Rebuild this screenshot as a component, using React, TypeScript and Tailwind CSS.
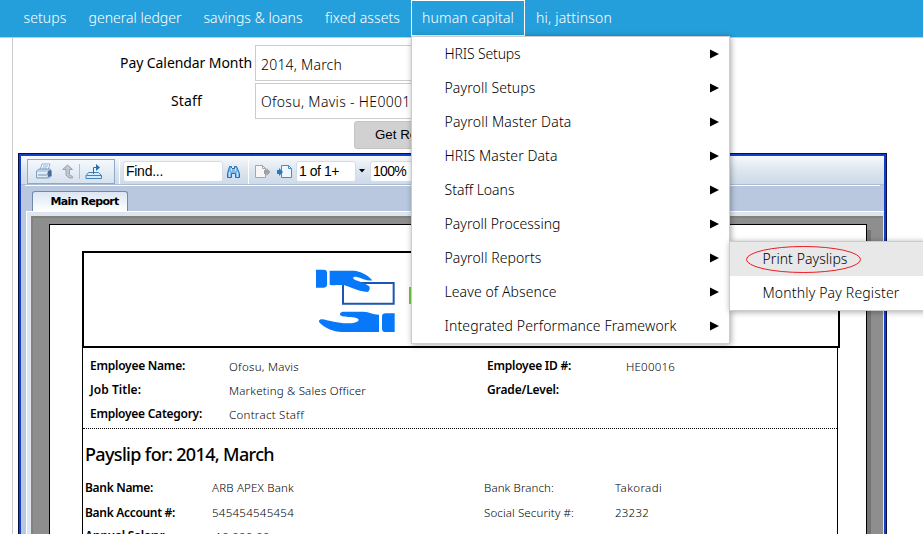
import { useLayoutEffect, useRef, useState } from "react";

/* Text set to a known line length: the tracking is worked out from the natural width. */
function Fit({ children, w, className = "" }: { children: string; w: number; className?: string }) {
  const ref = useRef<HTMLSpanElement>(null);
  const [tracking, setTracking] = useState(0);
  useLayoutEffect(() => {
    const natural = ref.current!.getBoundingClientRect().width;
    setTracking((w - natural) / children.length);
  }, []);
  return (
    <span ref={ref} className={`inline-block whitespace-pre ${className}`} style={{ letterSpacing: tracking }}>
      {children}
    </span>
  );
}

const nav = [
  { label: "setups", w: 43, box: "w-[66px]" },
  { label: "general ledger", w: 93, box: "w-[114px]" },
  { label: "savings & loans", w: 99, box: "w-[122px]" },
  { label: "fixed assets", w: 75, box: "w-[97px]" },
  { label: "human capital", w: 92, box: "w-[114px] border border-white" },
  { label: "hi, jattinson", w: 76, box: "w-[98px]" },
];

const menu = [
  { label: "HRIS Setups", w: 76 },
  { label: "Payroll Setups", w: 91 },
  { label: "Payroll Master Data", w: 127 },
  { label: "HRIS Master Data", w: 113 },
  { label: "Staff Loans", w: 70 },
  { label: "Payroll Processing", w: 116 },
  { label: "Payroll Reports", w: 97 },
  { label: "Leave of Absence", w: 112 },
  { label: "Integrated Performance Framework", w: 232 },
];

function NavBar() {
  return (
    <nav className="flex h-[38px] shrink-0 items-start border-b border-[#ccc] bg-[#259fdb] pl-3 text-sm font-[350] text-white">
      {nav.map((n) => (
        <div key={n.label} className={`flex h-[36px] items-center justify-center ${n.box}`}>
          <Fit w={n.w}>{n.label}</Fit>
        </div>
      ))}
    </nav>
  );
}

function Menus() {
  return (
    <>
      <div className="absolute top-[36px] left-[411px] h-[308px] w-[319px] border border-[#ccc] bg-white text-sm font-[350] text-black shadow-[1px_1px_6px_rgba(0,0,0,0.35)]">
        {menu.map((m) => (
          <div key={m.label} className="flex h-[34px] items-center justify-between pr-[10px] pl-[32.5px]">
            <Fit w={m.w}>{m.label}</Fit>
            <svg width="9" height="10" viewBox="0 0 9 10">
              <path d="M0 0.5 9 5 0 9.5z" fill="#000" />
            </svg>
          </div>
        ))}
      </div>
      <div className="absolute top-[241px] left-[729px] h-[70px] w-[210px] border border-[#ccc] bg-white text-sm font-[350] text-black shadow-[1px_1px_6px_rgba(0,0,0,0.35)]">
        <div className="flex h-[34px] items-center bg-[#e8e8e8] pl-[32.5px]">
          <Fit w={85}>Print Payslips</Fit>
        </div>
        <div className="flex h-[34px] items-center pl-[32.5px]">
          <Fit w={137}>Monthly Pay Register</Fit>
        </div>
      </div>
      <svg className="absolute top-[245px] left-[745px]" width="118" height="29" fill="none">
        <ellipse cx="58.5" cy="14.5" rx="57" ry="13" stroke="#ed1c24" />
      </svg>
    </>
  );
}

function Toolbar() {
  return (
    <div className="flex h-[29px] items-center border-b border-[#aebcd2] bg-linear-to-b from-[#f8fafc] via-[#dde6f0] to-[#cddae9] pt-[2px] pl-[6px] font-['Liberation_Sans',sans-serif] text-sm text-black">
      <div className="flex h-[25px] w-[88px] shrink-0 items-center border border-[#8fa9c4] bg-linear-to-b from-[#f4f8fc] to-[#d7e2ef] pl-[7px]">
        <svg width="18" height="17" viewBox="0 0 18 17">
          <path d="M5 7 7 1h8l-2 6z" fill="#fff" stroke="#8fb0d4" />
          <path d="M8 3h5M7 5h5" stroke="#7eb0de" />
          <path d="M1.5 8 4 6h11l1.5 2v5l-3 2h-12z" fill="#b9d0e8" stroke="#7f9fc2" />
          <path d="M2 9h10v5H2z" fill="#e2edf8" />
          <path d="M3 12h9" stroke="#6d8fb6" />
          <path d="M13 8v6l3-1V7z" fill="#426c9d" />
          <path d="M12 10h1.5v1.5H12z" fill="#e7683f" />
        </svg>
        <svg className="ml-[9px]" width="12" height="15" viewBox="0 0 12 15">
          <path d="M.7 5.5 5.5 1l5 4.5H7.4v5.2l3.2 2v1.2H7L4 11V5.5z" fill="#c4c6d2" stroke="#9b9fb0" />
        </svg>
        <div className="ml-[5px] h-[15px] w-px bg-[#aebdd0]" />
        <svg className="ml-[5px]" width="18" height="17" viewBox="0 0 18 17" fill="none">
          <path d="M3.5 9.5h10l3 3v3H1v-3z" fill="#d7eafa" stroke="#3c83bf" />
          <path d="M1.5 12.5h15" stroke="#3c83bf" />
          <path d="M8.5 11V4.5h4" stroke="#286fae" />
          <path d="m11 1 4 3.5-4 3.5z" fill="#286fae" />
        </svg>
      </div>
      <div className="ml-1 h-[25px] w-px shrink-0 bg-white" />
      <div className="ml-[3px] flex h-[21px] w-[100px] shrink-0 items-center rounded-[3px] border border-[#d6dce5] bg-white pl-[2px]">
        <Fit w={37}>Find...</Fit>
      </div>
      <svg className="ml-[3px] shrink-0" width="15" height="15" viewBox="0 0 15 15">
        <path d="M3.5 2.5h2v2h3v-2h2l3 7v4h-4v-4h-4v4h-4v-4z" fill="#7fb8e8" stroke="#2b6cad" />
        <path d="M3.5 8v5M11.5 8v5M5.5 4v3M9.5 4v3" stroke="#c9e5fb" />
      </svg>
      <div className="ml-[7px] h-[25px] w-px shrink-0 bg-white" />
      <svg className="ml-[6px] shrink-0" width="16" height="15" viewBox="0 0 16 15">
        <path d="M.5 1.5h7l3 3v9H.5z" fill="#f7f7f7" stroke="#a7a7a7" />
        <path d="M7.5 1.5v3h3" fill="none" stroke="#a7a7a7" />
        <path d="M9 6h2.5V4L15.5 8l-4 4v-2H9z" fill="#a1a1a1" />
      </svg>
      <svg className="ml-[6px] shrink-0" width="16" height="15" viewBox="0 0 16 15">
        <path d="M4.5 1.5h7l3 3v9h-10z" fill="#eef7ff" stroke="#3f8fcb" />
        <path d="M11.5 1.5v3h3" fill="none" stroke="#3f8fcb" />
        <path d="M0 6h2V4L6 8l-4 4v-2H0z" fill="#287bbb" />
      </svg>
      <div className="ml-[3px] flex h-[21px] w-[60px] shrink-0 items-center rounded-[3px] border border-[#d6dce5] bg-white pl-[2px]">
        <Fit w={40}>1 of 1+</Fit>
      </div>
      <svg className="ml-[3px] shrink-0" width="6" height="4">
        <path d="M0 0h6L3 3.5z" />
      </svg>
      <div className="ml-[5px] flex h-[21px] w-[70px] shrink-0 items-center rounded-[3px] border border-[#d6dce5] bg-white pl-[2px]">
        <Fit w={33}>100%</Fit>
      </div>
    </div>
  );
}

function Logo() {
  return (
    <svg width="79" height="65" viewBox="0 0 237 195" fill="#0878fa">
      <path d="M0 2h24q9 0 9 10v34q0 10-9 10H0z" />
      <path d="M81 42h152v62H81z" fill="#fff" stroke="#1c55b4" strokeWidth="6" />
      <path d="M41 5h72c20 2 42 12 56 29-16 3-30-6-46-10-12-2-15 4-7 8 14 5 34 12 44 20 3 8 0 15-6 17-26-2-46-12-68-20-16-3-30 2-45-2z" />
      <path d="M189 137c-22 0-28-9-46-9l-62 0c-10 1-12 9-4 13 14 6 38 1 49 8 8 8-10 13-27 14-33 1-58-8-79-12-9-1-14 5-9 10 14 15 40 27 67 28h111z" />
      <path d="M209 133h27v56h-27q-11 0-11-10v-36q0-10 11-10z" />
    </svg>
  );
}

const employee = [
  { a: "Employee Name:", aw: 95, b: "Ofosu, Mavis", bw: 70, c: "Employee ID #:", cw: 84, d: "HE00016", dw: 49 },
  { a: "Job Title:", aw: 51, b: "Marketing & Sales Officer", bw: 137, c: "Grade/Level:", cw: 72, d: "", dw: 0 },
  { a: "Employee Category:", aw: 112, b: "Contract Staff", bw: 75, c: "", cw: 0, d: "", dw: 0 },
];

const bank = [
  { a: "Bank Name:", aw: 68, b: "ARB APEX Bank", bw: 82, c: "Bank Branch:", cw: 70, d: "Takoradi", dw: 47, row: "h-[25px]" },
  { a: "Bank Account #:", aw: 90, b: "545454545454", bw: 82, c: "Social Security #:", cw: 90, d: "23232", dw: 34, row: "h-[25px]" },
  { a: "Annual Salary:", aw: 80, b: " 10,000.00", bw: 58, c: "", cw: 0, d: "", dw: 0, row: "h-[22px]" },
];

const value = "justify-self-start text-[11.5px] font-[350]";

function Payslip() {
  return (
    <div className="h-[311px] w-[818px] shrink-0 border border-b-0 border-black bg-white pt-[26px] pl-8 text-black">
      <div className="flex h-[97px] w-[758px] items-start border-2 border-black pt-4 pl-[232px]">
        <Logo />
        <div className="mt-[18px] ml-[14px] h-[17px] w-3 bg-[#7ac943]" />
      </div>
      <div className="h-[190px] w-[756px] border-x border-black">
        <div className="h-[81px] border-b border-dotted border-black pt-[6px] pl-[7px] text-xs">
          {employee.map((r) => (
            <div key={r.a} className="grid h-6 grid-cols-[139px_258px_139px_1fr] items-center">
              <Fit w={r.aw} className="justify-self-start font-semibold">{r.a}</Fit>
              {r.b && <Fit w={r.bw} className={`pt-px ${value}`}>{r.b}</Fit>}
              {r.c && <Fit w={r.cw} className="justify-self-start font-semibold">{r.c}</Fit>}
              {r.d && <Fit w={r.dw} className={`pt-px ${value}`}>{r.d}</Fit>}
            </div>
          ))}
        </div>
        <div className="pt-3 pl-[2px]">
          <div className="flex h-[26px] items-center text-lg font-medium">
            <Fit w={189}>Payslip for: 2014, March</Fit>
          </div>
          <div className="pt-2 text-xs">
            {bank.map((r) => (
              <div key={r.a} className={`grid grid-cols-[127px_272px_131px_1fr] items-center ${r.row}`}>
                <Fit w={r.aw} className="justify-self-start font-semibold">{r.a}</Fit>
                <Fit w={r.bw} className={`pt-px ${value}`}>{r.b}</Fit>
                {r.c && <Fit w={r.cw} className={value}>{r.c}</Fit>}
                {r.d && <Fit w={r.dw} className={`pt-px ${value}`}>{r.d}</Fit>}
              </div>
            ))}
          </div>
        </div>
      </div>
    </div>
  );
}

function ReportViewer() {
  return (
    <div className="ml-[5px] h-[381px] w-[869px] border border-b-0 border-[#07103f]">
      <div className="h-[380px] border-2 border-b-0 border-[#143fcb] bg-[#b9c8df]">
        <Toolbar />
        <div className="mx-1 h-px bg-white" />
        <div className="flex h-[25px] items-end pl-[11px]">
          <div className="flex h-[20px] w-[96px] items-center justify-center rounded-t-[3px] border border-b-0 border-[#7189aa] bg-linear-to-b from-[#dce6f2] to-white pl-[9px] font-['DejaVu_Sans',sans-serif] text-[11px] font-bold text-black">
            <Fit w={68}>Main Report</Fit>
          </div>
        </div>
        <div className="ml-[5px] h-[324px] border-t border-l border-white bg-[#dfe5ef] pt-1 pl-1">
          <div className="flex h-[320px] w-[852px] items-start border-t-2 border-l-2 border-t-[#7f837e] border-l-[#828282] bg-[#8e8e8e] pt-[6px] pl-4">
            <Payslip />
            <div className="mt-[6px] h-[306px] w-1 bg-[#747474]" />
          </div>
        </div>
      </div>
    </div>
  );
}

export default function App() {
  return (
    <div className="relative flex h-[534px] w-[923px] flex-col overflow-hidden bg-white font-['Noto_Sans',sans-serif]">
      <NavBar />
      <main className="ml-3 h-[496px] border-l border-[#ccc] text-sm text-black">
        <div className="flex h-[115px] flex-col">
          <div className="flex pt-[7px]">
            <div className="flex h-[36px] w-[242px] items-center justify-end pr-[3px]">
              <Fit w={132}>Pay Calendar Month</Fit>
            </div>
            <div className="flex h-[36px] w-[300px] items-center border border-[#ccc] pt-[3px] pl-[5px] font-light">
              <Fit w={81}>2014, March</Fit>
            </div>
          </div>
          <div className="flex pt-[2px]">
            <div className="flex h-[36px] w-[242px] items-center pl-[158px]">
              <Fit w={31}>Staff</Fit>
            </div>
            <div className="flex h-[36px] w-[300px] items-center border border-[#ccc] pt-[2px] pl-[5px] font-light">
              <Fit w={158}>Ofosu, Mavis - HE00016</Fit>
            </div>
          </div>
          <div className="mt-[2px] ml-[341px] flex h-[28px] w-[110px] shrink-0 items-center rounded-[3px] border border-[#c4c4c4] bg-[#d1d1d1] pl-5 font-['Liberation_Sans',sans-serif] text-[13.33px]">
            Get Report
          </div>
        </div>
        <ReportViewer />
      </main>
      <Menus />
    </div>
  );
}
